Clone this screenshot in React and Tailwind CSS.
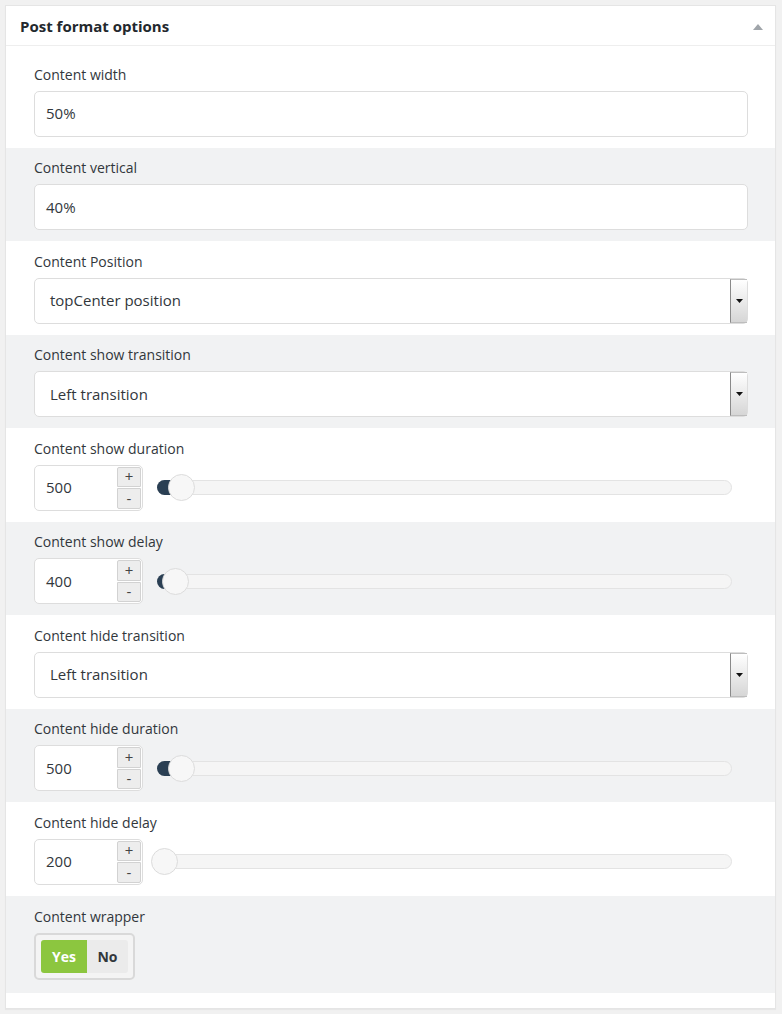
import React from "react";

const rows = [
  { label: "Content width", type: "text", value: "50%" },
  { label: "Content vertical", type: "text", value: "40%" },
  { label: "Content Position", type: "select", value: "topCenter position" },
  { label: "Content show transition", type: "select", value: "Left transition" },
  { label: "Content show duration", type: "slider", value: 500 },
  { label: "Content show delay", type: "slider", value: 400 },
  { label: "Content hide transition", type: "select", value: "Left transition" },
  { label: "Content hide duration", type: "slider", value: 500 },
  { label: "Content hide delay", type: "slider", value: 200 },
];

const SLIDER_MIN = 200;
const SLIDER_MAX = 10000;

const TextField = ({ value }) => (
  <div className="h-[46px] rounded-[5px] border border-[#dddddd] bg-white flex items-center pl-[11px] text-[15px] text-[#32373c]">
    {value}
  </div>
);

const SelectField = ({ value }) => (
  <div className="h-[46px] rounded-[5px] border border-[#dddddd] bg-white flex items-stretch text-[15px] text-[#32373c]">
    <div className="flex-1 flex items-center pl-[15px]">{value}</div>
    <div className="w-[17px] border-l border-[#8a8a8a] border-y border-y-[#bdbdbd] bg-gradient-to-b from-white to-[#d6d6d6] flex items-center justify-center">
      <svg width="7" height="4" viewBox="0 0 7 4">
        <path d="M0 0h7L3.5 4z" fill="#111" />
      </svg>
    </div>
  </div>
);

const SliderField = ({ value }) => {
  const frac = (value - SLIDER_MIN) / (SLIDER_MAX - SLIDER_MIN);
  return (
    <div className="flex items-center">
      <div className="relative w-[109px] h-[46px] rounded-[5px] border border-[#dddddd] bg-white flex items-center pl-[11px] text-[15px] text-[#32373c]">
        {value}
        <div className="absolute right-[1px] top-[1px] bottom-[1px] w-[24px] flex flex-col gap-[1px]">
          <div className="flex-1 bg-[#ededed] border border-[#d2d2d2] rounded-t-[2px] flex items-center justify-center text-[15px] leading-none text-[#444]">
            +
          </div>
          <div className="flex-1 bg-[#ededed] border border-[#d2d2d2] rounded-b-[2px] flex items-center justify-center text-[15px] leading-none text-[#444]">
            -
          </div>
        </div>
      </div>
      <div className="relative flex-1 ml-[8px] mr-[16px] h-[27px]">
        <div className="absolute left-[6px] right-0 top-[6px] h-[15px] rounded-full bg-[#f5f5f5] border border-[#e3e3e3]" />
        <div
          className="absolute left-[6px] top-[6px] h-[15px] rounded-l-full bg-[#2a3f53]"
          style={{ width: `calc(${frac} * (100% - 27px) + 8px)` }}
        />
        <div
          className="absolute top-0 w-[27px] h-[27px] rounded-full bg-[#f7f7f7] border border-[#dcdcdc]"
          style={{ left: `calc(${frac} * (100% - 27px))` }}
        />
      </div>
    </div>
  );
};

export default function App() {
  return (
    <div
      className="min-h-screen bg-[#f1f1f1] pt-[5px] pl-[5px] pr-[6px] pb-[5px]"
      style={{ fontFamily: '"Open Sans", "Noto Sans", sans-serif' }}
    >
      <div className="bg-white border border-[#e5e5e5] shadow-[0_1px_1px_rgba(0,0,0,0.04)]">
        <div className="h-[40px] border-b border-[#eeeeee] px-[14px] pt-[2px] flex items-center justify-between">
          <h2 className="text-[15px] font-bold text-[#23282d]">Post format options</h2>
          <svg width="10" height="6" viewBox="0 0 10 6" className="mr-[-2px]">
            <path d="M0 6L5 0L10 6z" fill="#a0a5aa" />
          </svg>
        </div>

        <div className="pt-[8px] pb-[15px]">
          {rows.map((row, i) => (
            <div
              key={row.label}
              className={`pl-[28px] pr-[27px] pt-[10.5px] pb-[11px] ${i % 2 === 1 ? "bg-[#f1f2f3]" : "bg-white"}`}
            >
              <div className="text-[14px] leading-[20px] text-[#32373c] mb-[6px]">{row.label}</div>
              {row.type === "text" && <TextField value={row.value} />}
              {row.type === "select" && <SelectField value={row.value} />}
              {row.type === "slider" && <SliderField value={row.value} />}
            </div>
          ))}

          <div className="pl-[28px] pr-[27px] pt-[11px] pb-[13px] bg-[#f1f2f3]">
            <div className="text-[14px] leading-[20px] text-[#32373c] mb-[6px]">Content wrapper</div>
            <div className="inline-flex p-[5px] rounded-[5px] border-2 border-[#d9d9d9] bg-[#f4f4f4]">
              <div className="w-[46px] h-[33px] bg-[#8cc63f] rounded-l-[3px] flex items-center justify-center text-[14px] font-bold text-white">
                Yes
              </div>
              <div className="w-[41px] h-[33px] bg-[#ebebeb] rounded-r-[3px] flex items-center justify-center text-[14px] font-bold text-[#32373c]">
                No
              </div>
            </div>
          </div>
        </div>
      </div>
    </div>
  );
}
